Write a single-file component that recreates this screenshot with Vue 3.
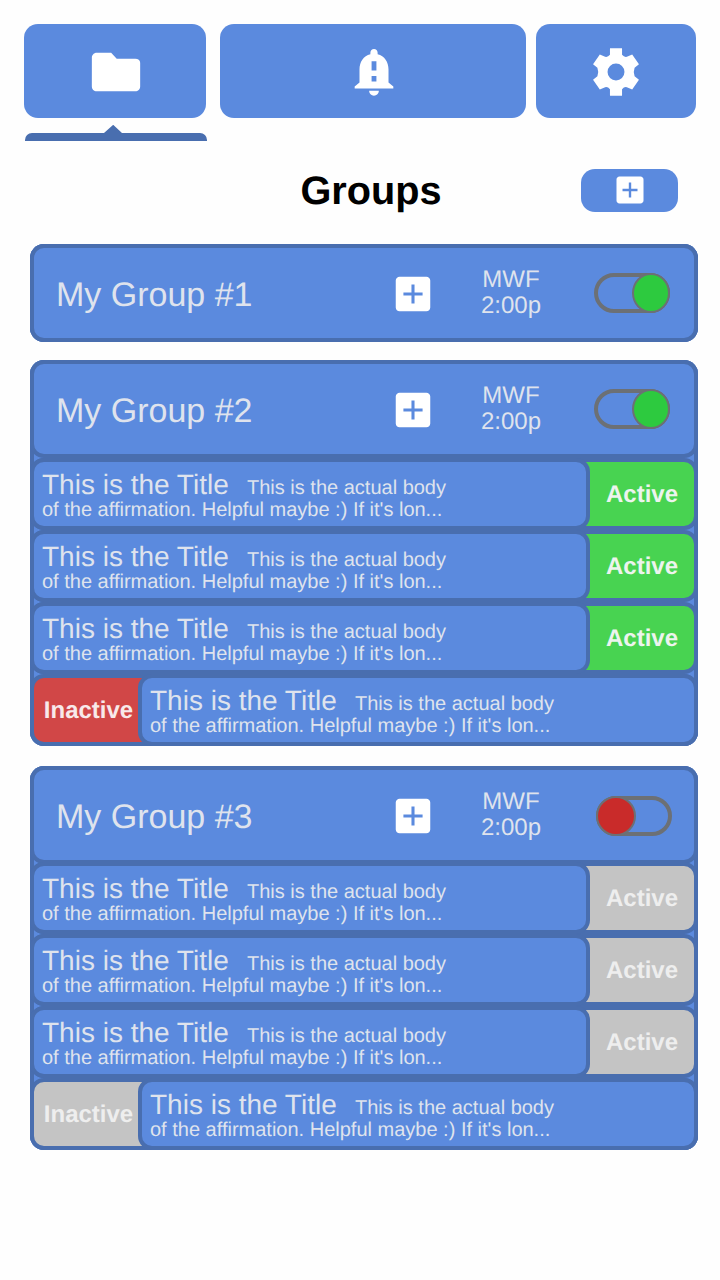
<script setup>
const rows = [
  { active: true },
  { active: true },
  { active: true },
  { active: false },
]
const groups = [
  { name: 'My Group #1', on: true, rows: [] },
  { name: 'My Group #2', on: true, rows },
  { name: 'My Group #3', on: false, rows },
]
</script>

<template>
  <div class="screen">
    <nav class="tabs">
      <button class="tab folder">
        <svg class="icon" viewBox="0 0 24 24"><path d="M10 4H4c-1.1 0-1.99.9-1.99 2L2 18c0 1.1.9 2 2 2h16c1.1 0 2-.9 2-2V8.200c0-1.100-.9-1.700-2-1.700h-7.700L10 4z" /></svg>
      </button>
      <button class="tab alerts">
        <svg class="icon" viewBox="0 0 24 24"><path d="M18 16.300v-5.300c0-3.070-1.640-5.640-4.500-6.320V4c0-.83-.67-1.500-1.500-1.500s-1.500.67-1.500 1.500v.68C7.630 5.360 6 7.920 6 11v5.300l-2 1.700v.800h16v-.800l-2-1.700zm-5-.4h-2v-2.200h2v2.200zm0-4.500h-2V7.500h2v3.900zm-1 10.400c1.100 0 2-.9 2-2h-4c0 1.100.89 2 2 2z" /></svg>
      </button>
      <button class="tab settings">
        <svg class="icon" viewBox="-12 -12 24 24"><path fill-rule="evenodd" d="M-2.500-9.800H2.500V-7.100Q3.400-6 4.500-6.300L6.700-7.200 9.500-3.200 7.700-1.800Q7 0 7.700 1.800L9.500 3.200 6.700 7.200 4.500 6.300Q3.400 6 2.500 7.100V9.800H-2.500V7.100Q-3.400 6-4.500 6.300L-6.700 7.200-9.500 3.200-7.700 1.800Q-7 0-7.700-1.800L-9.500-3.200-6.700-7.200-4.500-6.300Q-3.400-6-2.500-7.100zM0-3.500A3.500 3.500 0 1 0 0 3.500 3.500 3.500 0 1 0 0-3.500z" /></svg>
      </button>
    </nav>
    <svg class="indicator" viewBox="0 0 182 16"><path d="M0 16v-1a7 7 0 0 1 7-7h72l9.200-8.200L97 8h78a7 7 0 0 1 7 7v1z" /></svg>

    <header class="heading">
      <h1>Groups</h1>
      <button class="add">
        <svg viewBox="0 0 24 24"><path d="M19 3H5c-1.110 0-2 .9-2 2v14c0 1.100.89 2 2 2h14c1.100 0 2-.9 2-2V5c0-1.100-.9-2-2-2zM17 12.800h-4.200V17h-1.600v-4.200H7v-1.600h4.200V7h1.600v4.200H17z" /></svg>
      </button>
    </header>

    <main class="groups">
      <section v-for="g in groups" :key="g.name" class="group" :class="{ off: !g.on }">
        <div class="box group-head">
          <span class="name">{{ g.name }}</span>
          <svg class="plus" viewBox="0 0 24 24"><path d="M19 3H5c-1.110 0-2 .9-2 2v14c0 1.100.89 2 2 2h14c1.100 0 2-.9 2-2V5c0-1.100-.9-2-2-2zM17 12.800h-4.200V17h-1.600v-4.200H7v-1.600h4.200V7h1.600v4.200H17z" /></svg>
          <div class="when"><span>MWF</span><span>2:00p</span></div>
          <div class="toggle"><span class="knob"></span></div>
        </div>
        <div v-if="g.rows.length" class="list">
          <div v-for="(r, i) in g.rows" :key="i" class="box row" :class="r.active ? 'active' : 'inactive'">
            <p class="box card">
              <span class="line"><span class="title">This is the Title</span><span>This is the actual body</span></span>
              <span class="line rest">of the affirmation. Helpful maybe :) If it's lon...</span>
            </p>
            <span class="status">{{ r.active ? 'Active' : 'Inactive' }}</span>
          </div>
        </div>
      </section>
    </main>
  </div>
</template>

<style>
body {
  background: #fefefe;
}
</style>

<style scoped>
.screen {
  box-sizing: border-box;
  width: 720px;
  height: 1280px;
  padding-top: 24px;
  overflow: hidden;
  font-family: "Liberation Sans", Arial, sans-serif;
  text-rendering: geometricPrecision;
  color: #dfe3ed;
}
button {
  border: 0;
  padding: 0;
  background: #5b8ade;
  border-radius: 14px;
  display: flex;
  align-items: center;
  justify-content: center;
}
svg {
  fill: #fff;
  display: block;
}
.tabs {
  display: flex;
  height: 94px;
  padding-left: 24px;
}
.tab {
  box-sizing: border-box;
  padding-top: 1px;
}
.folder {
  width: 182px;
  margin-right: 14px;
  padding-left: 2px;
}
.alerts {
  width: 306px;
  margin-right: 10px;
  padding-left: 2px;
}
.settings {
  width: 160px;
}
.icon {
  width: 58px;
  height: 58px;
}
.indicator {
  width: 182px;
  height: 16px;
  margin: 7px 0 0 25px;
  fill: #496eaf;
}
.heading {
  display: grid;
  grid-template-columns: 300.500px 280.500px 97px;
  align-items: start;
  height: 75px;
  margin-top: 28px;
}
h1 {
  grid-column: 2;
  margin: 0;
  padding-top: 1px;
  font-size: 39.700px;
  line-height: 43px;
  color: #000;
}
.add {
  height: 43px;
  box-sizing: border-box;
  padding: 0 0 1px 0;
}
.add svg {
  width: 36px;
  height: 36px;
}
.groups {
  width: 668px;
  margin-left: 30px;
  display: flex;
  flex-direction: column;
}
.group {
  background: #5b8ade;
  border-radius: 14px;
  box-shadow: inset 0 0 0 4px #496eaf;
  margin-bottom: 18px;
}
.group + .group {
  margin-bottom: 20px;
}
.box {
  box-sizing: border-box;
  border: 4px solid #496eaf;
  border-radius: 14px;
  background: #5b8ade;
}
.group-head {
  height: 98px;
  display: grid;
  grid-template-columns: 338px 92px 90px 1fr;
  padding-left: 22px;
  align-items: center;
}
.name {
  font-size: 34px;
  line-height: 40px;
  padding-top: 4px;
}
.plus {
  width: 46px;
  height: 46px;
  margin-top: 2px;
}
.group-head .plus {
  margin-left: -4px;
}
.when {
  display: flex;
  flex-direction: column;
  width: 70px;
  text-align: center;
  font-size: 24px;
  line-height: 26px;
  padding-bottom: 1px;
  margin-left: -10px;
}
.toggle {
  box-sizing: border-box;
  width: 76px;
  height: 40px;
  border: 4px solid #6c7075;
  border-radius: 20px;
  margin-left: 18px;
  display: flex;
  justify-content: flex-end;
}
.knob {
  box-sizing: border-box;
  flex: none;
  width: 38px;
  height: 40px;
  margin: -4px;
  border: 2px solid #6c7075;
  border-radius: 50%;
  background: #2dca3f;
}
.off .toggle {
  justify-content: flex-start;
  margin-left: 20px;
  margin-top: 2px;
}
.off .knob {
  width: 40px;
  background: #c92b2a;
}
.off .list {
  margin-top: -2px;
}
.row {
  height: 72px;
  display: flex;
}
.row.active {
  background: #48d351;
}
.row.inactive {
  background: #d14747;
  flex-direction: row-reverse;
}
.off .row {
  background: #c4c4c4;
}
.card {
  width: 560px;
  height: 72px;
  flex: none;
  margin: -4px;
  padding: 8px 0 0 8px;
  font-size: 20px;
  white-space: nowrap;
}
.line {
  display: flex;
  align-items: baseline;
  height: 29px;
  line-height: 29px;
}
.line.rest {
  height: 22px;
  line-height: 22px;
}
.title {
  font-size: 28px;
  width: 205px;
}
.status {
  flex: 1;
  text-align: center;
  font-size: 24px;
  font-weight: bold;
  line-height: 66px;
  color: #edf4ee;
  padding-left: 4px;
}
.inactive .status {
  padding: 0 0 0 1px;
  color: #f8e9ea;
}
.off .status {
  color: #eeeeee;
}
</style>
